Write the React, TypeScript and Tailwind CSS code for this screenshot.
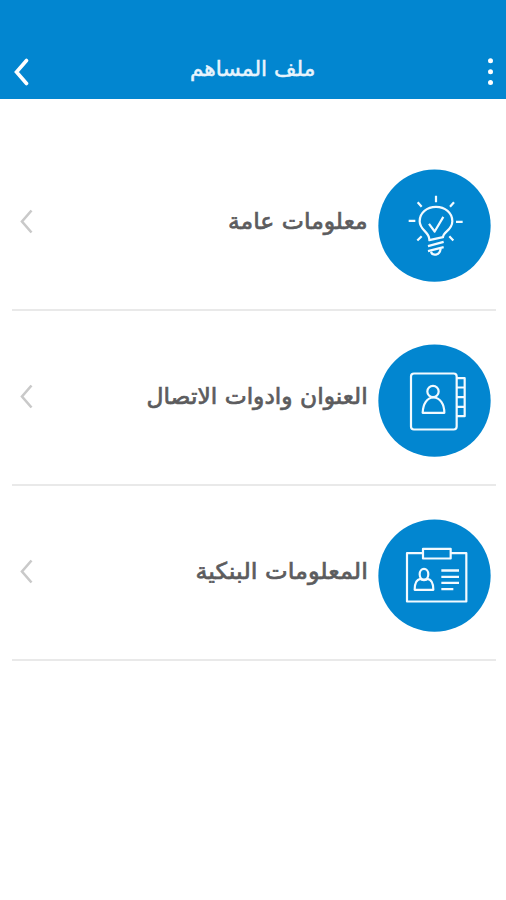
import type { ReactNode } from "react";

const font = "font-['DejaVu_Sans',sans-serif]";

function BulbIcon() {
  return (
    <g>
      <path d="M178 239C178 216 149 211 149 184C149 159 171 141 198 141C225 141 247 159 247 184C247 211 219 216 219 232L178 241Z" />
      <path d="M177 192L194 215L220 171" />
      <path d="M198 108V127M143 127L155 141M252 127L240 141M116 183H136M258 186H278M155 229L142 242M238 229L250 242" />
      <path d="M174 259L221 246M174 274L221 262M183 276C187 289 209 288 212 267" />
    </g>
  );
}

function AddressBookIcon() {
  return (
    <g>
      <rect x="123" y="116" width="137" height="168" rx="9" />
      <path d="M260 130H284V244H260M260 158H284M260 187H284M260 216H284" />
      <circle cx="189" cy="170" r="17" />
      <path d="M158 234C159 207 171 188 190 188C210 188 223 207 223 234Z" />
    </g>
  );
}

function IdCardIcon() {
  return (
    <g>
      <path d="M159 130H111V275H289V130H242" />
      <rect x="159" y="117" width="83" height="29" />
      <ellipse cx="162" cy="193" rx="13" ry="16" />
      <path d="M151 207C138 209 134 219 134 240H190C190 219 185 209 173 207C169 212 155 212 151 207Z" />
      <path strokeWidth="7" d="M214 182H267M214 201H267M214 219H267M214 238H250" />
    </g>
  );
}

function Row({ label, labelClass, icon }: { label: string; labelClass: string; icon: ReactNode }) {
  return (
    <li className="flex h-[175px] items-start border-b-2 border-[#e9e9e9] pt-[33px]">
      <svg className="mt-[40px] ml-[8px] h-[25px] w-[14px] shrink-0" viewBox="0 0 14 25" fill="none" stroke="#c9c9c9" strokeWidth="2.6">
        <path d="M11.5 1.5L2 12.5L11.5 23.5" />
      </svg>
      <div className="mt-[34px] mr-[10px] flex h-9 flex-1 items-center justify-start" dir="rtl">
        <span className={`${font} inline-block origin-right whitespace-nowrap text-[23px] text-[#5c5c5e] [-webkit-text-stroke:0.7px_#5c5c5e] ${labelClass}`}>{label}</span>
      </div>
      <svg className="mr-[5px] h-[113px] w-[113px] shrink-0" viewBox="24 27.5 339 339" fill="none" stroke="#f2faff" strokeWidth="6.6" strokeLinejoin="round">
        <circle cx="193.5" cy="197.5" r="168.5" fill="#0286d0" stroke="none" />
        {icon}
      </svg>
    </li>
  );
}

export default function App() {
  return (
    <div className="h-[900px] w-[506px] overflow-hidden bg-white">
      <header className="flex h-[99px] items-start justify-between bg-[#0286d0] pt-[56px]">
        <svg className="ml-[13px] h-[30px] w-[18px]" viewBox="0 0 18 30" fill="none" stroke="white" strokeWidth="3.6" strokeLinecap="round">
          <path d="M13.5 4.5L3.5 16L13.5 27.5" />
        </svg>
        <h1 className={`${font} mt-[2px] mr-[11px] flex h-6 scale-x-[1.035] items-center whitespace-nowrap text-[21px] text-[#e8f4fd] [-webkit-text-stroke:0.5px_#e8f4fd]`} dir="rtl">
          ملف المساهم
        </h1>
        <svg className="mr-[11px] h-[30px] w-[9px]" viewBox="0 0 9 30" fill="white">
          <circle cx="4.5" cy="4.8" r="2.5" />
          <circle cx="4.5" cy="15.8" r="2.5" />
          <circle cx="4.5" cy="26.6" r="2.5" />
        </svg>
      </header>
      <ul className="mr-[10px] ml-3 pt-[37px]">
        <Row label="معلومات عامة" labelClass="scale-x-[1.022]" icon={<BulbIcon />} />
        <Row label="العنوان وادوات الاتصال" labelClass="scale-x-[1.016]" icon={<AddressBookIcon />} />
        <Row label="المعلومات البنكية" labelClass="scale-x-[1.046]" icon={<IdCardIcon />} />
      </ul>
    </div>
  );
}
